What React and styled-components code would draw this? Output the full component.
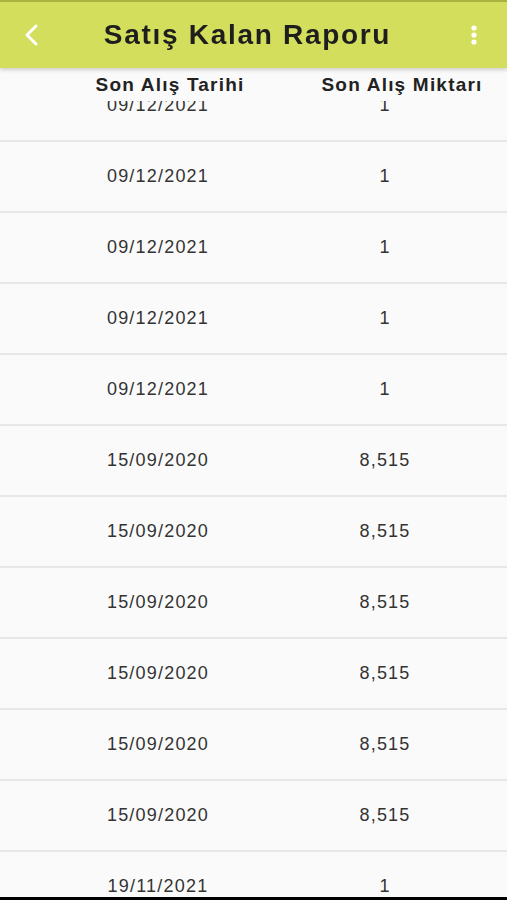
import React, { useEffect, useRef } from 'react';
import styled, { createGlobalStyle } from 'styled-components';

const GlobalStyle = createGlobalStyle`
  html, body {
    margin: 0;
    padding: 0;
    background: #fafafa;
  }
  body {
    font-family: "Liberation Sans", Arial, sans-serif;
  }
  * {
    box-sizing: border-box;
  }
`;

const Screen = styled.div`
  width: 507px;
  height: 900px;
  display: flex;
  flex-direction: column;
  background: #fafafa;
  overflow: hidden;
`;

const AppBar = styled.header`
  flex: 0 0 68px;
  display: grid;
  grid-template-columns: 62px 1fr 62px;
  align-items: center;
  background: #d3de5c;
  border-top: 2px solid #a7b23f;
  box-shadow: 0 2px 4px rgba(0, 0, 0, 0.18);
  position: relative;
  z-index: 2;
`;

const IconButton = styled.button`
  border: 0;
  background: none;
  padding: 0 ${p => (p.$end ? '4px' : '0')} 0 0;
  height: 66px;
  display: flex;
  align-items: center;
  justify-content: center;
  cursor: pointer;
`;

const Title = styled.h1`
  margin: 0 12px 0 0;
  justify-self: center;
  font-size: 28px;
  font-weight: 700;
  letter-spacing: 1.7px;
  color: #1e1e1e;
  white-space: nowrap;
`;

const ScrollArea = styled.div`
  flex: 1;
  overflow: hidden;
  position: relative;
`;

const HeaderRow = styled.div`
  position: sticky;
  top: 0;
  z-index: 1;
  height: 33px;
  display: grid;
  grid-template-columns: 340px 124px 1fr;
  align-items: center;
  background: #fafafa;
`;

const HeaderCell = styled.div`
  justify-self: center;
  font-size: 19px;
  font-weight: 700;
  letter-spacing: 1.2px;
  color: #222;
  white-space: nowrap;
  padding-top: 1px;
`;

const Row = styled.div`
  height: 71px;
  display: grid;
  grid-template-columns: 316px 138px 1fr;
  align-items: center;
  border-bottom: 2px solid #e7e7e7;
`;

const Cell = styled.div`
  text-align: center;
  font-size: 18px;
  letter-spacing: 1.2px;
  color: #333;
`;

const BottomBar = styled.div`
  flex: 0 0 3px;
  background: #000;
`;

const rows = [
  ['09/12/2021', '1'],
  ['09/12/2021', '1'],
  ['09/12/2021', '1'],
  ['09/12/2021', '1'],
  ['09/12/2021', '1'],
  ['15/09/2020', '8,515'],
  ['15/09/2020', '8,515'],
  ['15/09/2020', '8,515'],
  ['15/09/2020', '8,515'],
  ['15/09/2020', '8,515'],
  ['15/09/2020', '8,515'],
  ['19/11/2021', '1'],
  ['19/11/2021', '1'],
];

function BackIcon() {
  return (
    <svg width="20" height="24" viewBox="0 0 20 24">
      <polyline
        points="15,3 6,12 15,21"
        fill="none"
        stroke="#fff"
        strokeWidth="3"
        strokeLinecap="round"
        strokeLinejoin="round"
      />
    </svg>
  );
}

function MoreIcon() {
  return (
    <svg width="8" height="22" viewBox="0 0 8 22">
      <circle cx="4" cy="4" r="2.6" fill="#fff" />
      <circle cx="4" cy="11" r="2.6" fill="#fff" />
      <circle cx="4" cy="18" r="2.6" fill="#fff" />
    </svg>
  );
}

export default function App() {
  const listRef = useRef();

  useEffect(() => {
    if (listRef.current) listRef.current.scrollTop = 30;
  }, []);

  return (
    <Screen>
      <GlobalStyle />
      <AppBar>
        <IconButton aria-label="Geri">
          <BackIcon />
        </IconButton>
        <Title>Satış Kalan Raporu</Title>
        <IconButton aria-label="Menü" $end>
          <MoreIcon />
        </IconButton>
      </AppBar>
      <ScrollArea ref={listRef}>
        <HeaderRow>
          <HeaderCell>Son Alış Tarihi</HeaderCell>
          <HeaderCell>Son Alış Miktarı</HeaderCell>
        </HeaderRow>
        {rows.map(([date, qty], index) => (
          <Row key={index}>
            <Cell>{date}</Cell>
            <Cell>{qty}</Cell>
          </Row>
        ))}
      </ScrollArea>
      <BottomBar />
    </Screen>
  );
}
